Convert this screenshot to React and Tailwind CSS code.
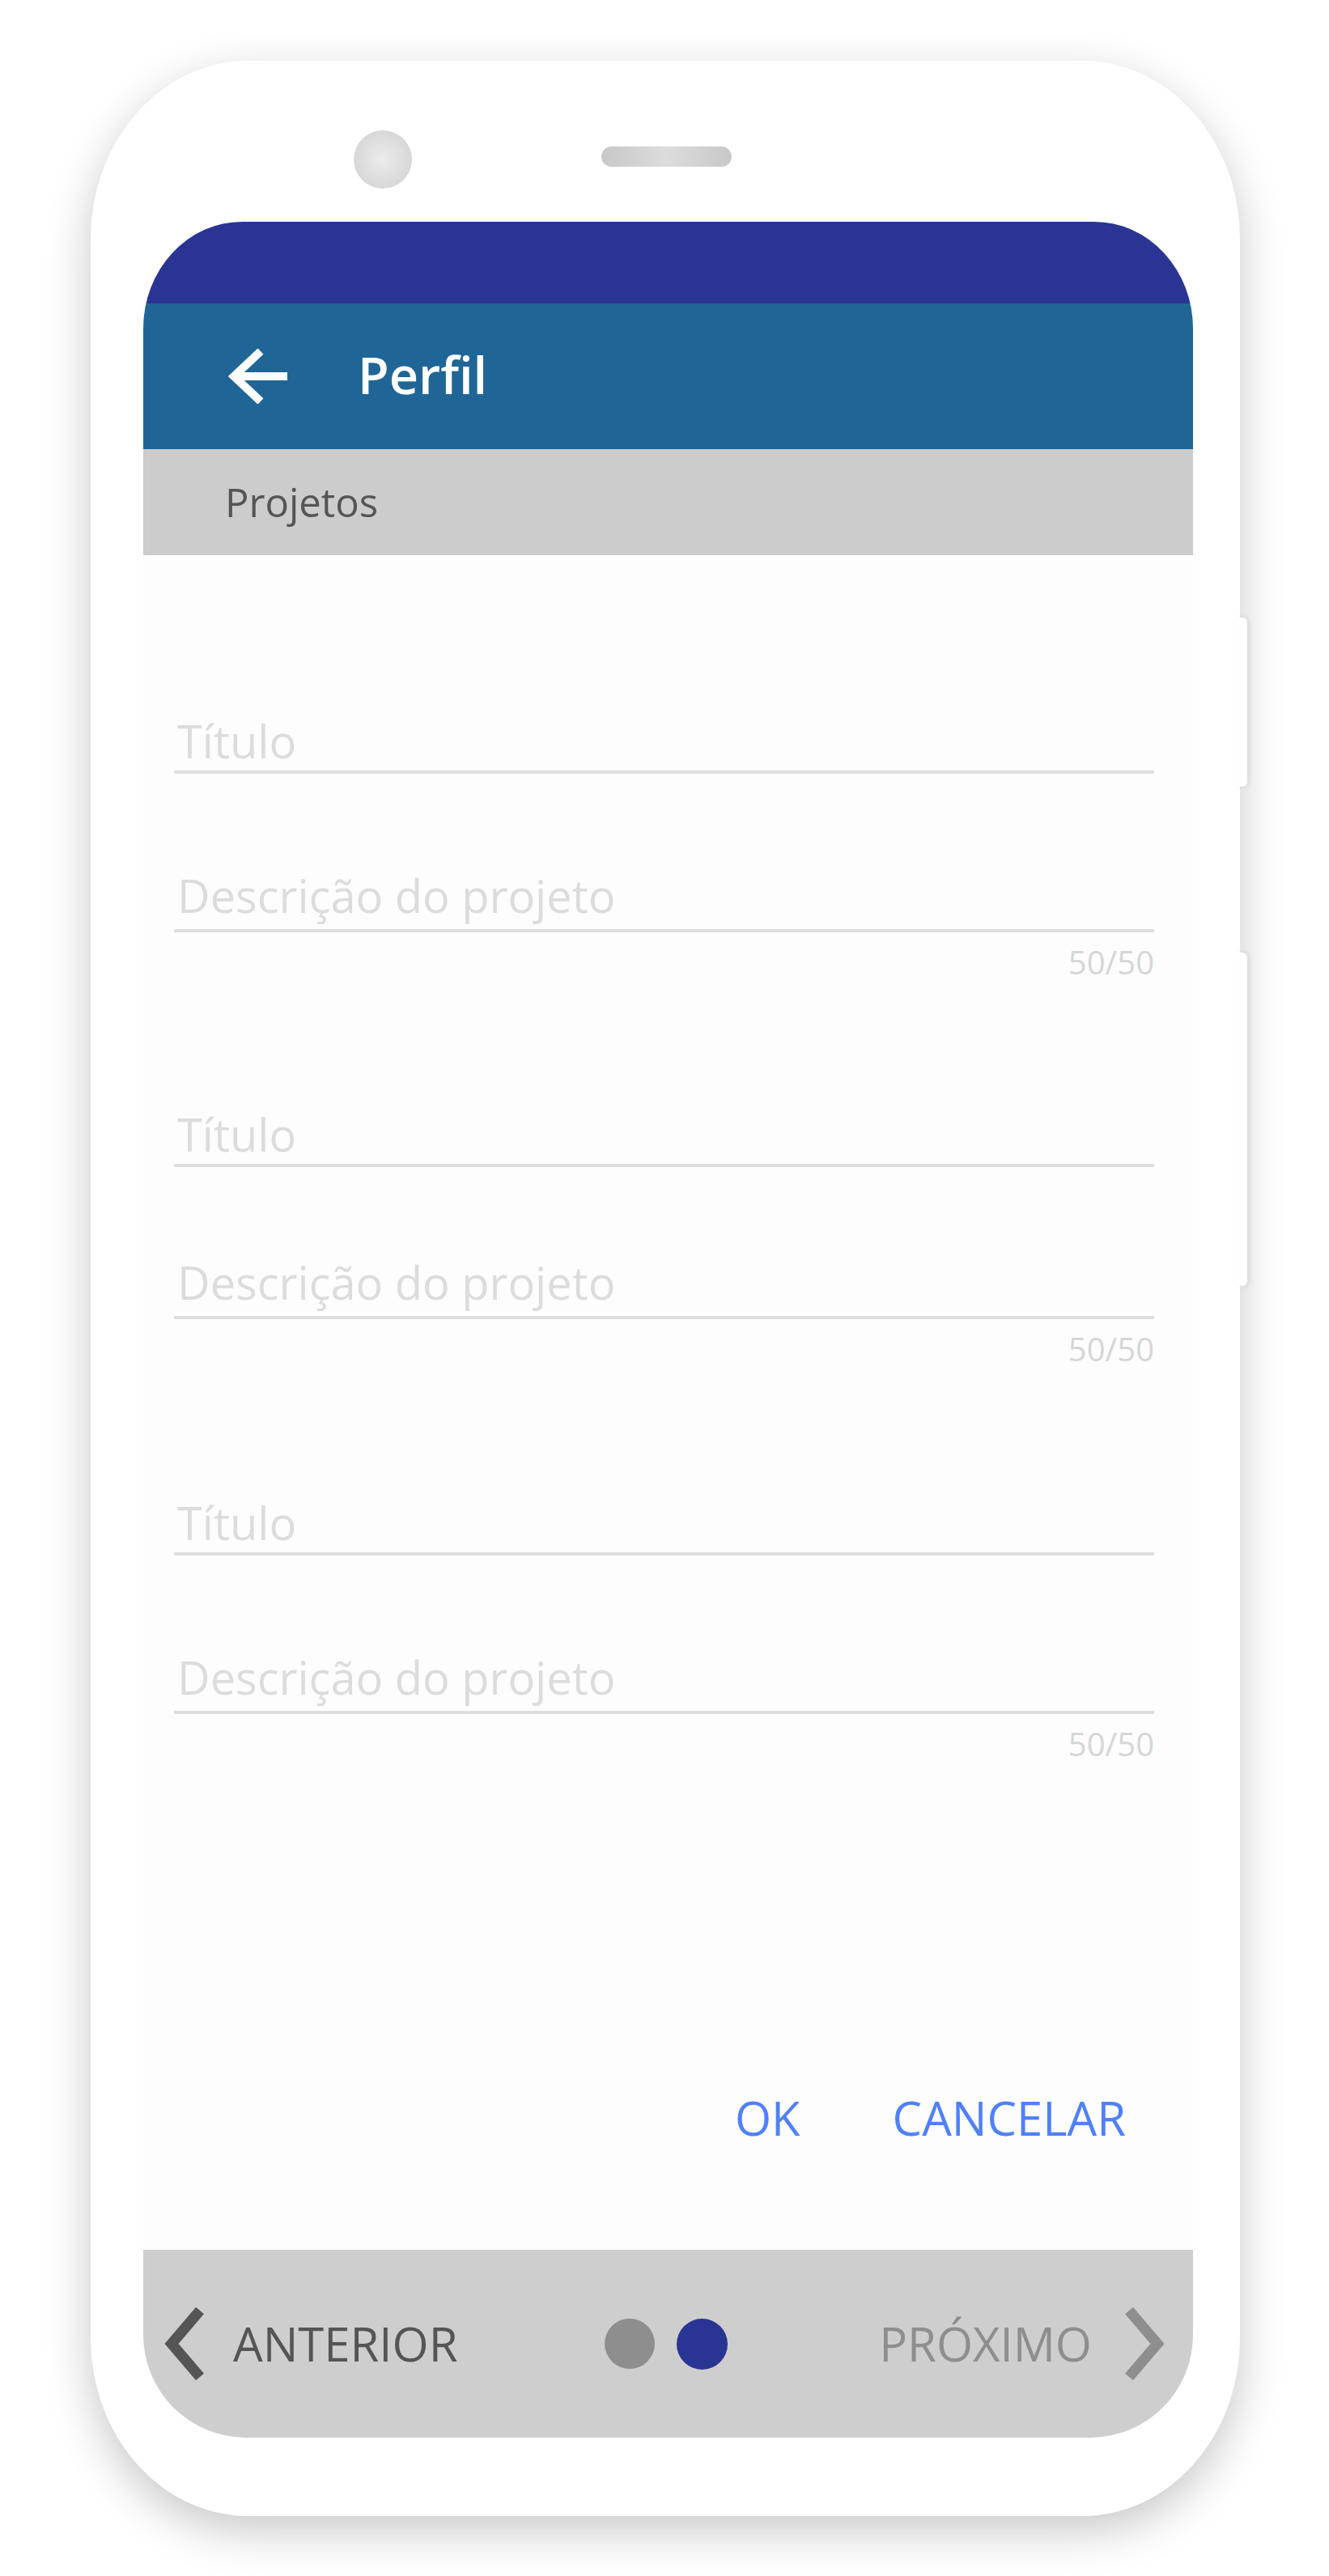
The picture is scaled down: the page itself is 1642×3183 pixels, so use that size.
import React from 'react';

const font = "font-['Open_Sans','Noto_Sans',sans-serif]";

function BackArrow() {
  return (
    <svg width="74" height="68" viewBox="0 0 74 68" fill="none">
      <polyline points="40,3 7,34 40,65" stroke="#fff" strokeWidth="10" strokeLinejoin="miter" />
      <line x1="7" y1="34" x2="73" y2="34" stroke="#fff" strokeWidth="10" />
    </svg>
  );
}

function Chevron({ dir = 'left', color }) {
  const pts = dir === 'left' ? '44,4 9,45 44,86' : '6,4 41,45 6,86';
  return (
    <svg width="50" height="90" viewBox="0 0 50 90" fill="none">
      <polyline points={pts} stroke={color} strokeWidth="13" strokeLinejoin="miter" />
    </svg>
  );
}

function ProjectFields({ className = '', descGap = 'mt-[122px]' }) {
  return (
    <div className={`flex flex-col w-[1211px] ml-[38px] ${className}`}>
      <div className="border-b-4 border-[#dedede] pb-[9px]">
        <p className="text-[56px] leading-none text-[#dcdcdc] pl-[4px]">Título</p>
      </div>
      <div className={`border-b-4 border-[#dedede] pb-[14px] ${descGap}`}>
        <p className="text-[56px] leading-none text-[#dcdcdc] pl-[4px]">Descrição do projeto</p>
      </div>
      <p className="text-[40px] leading-none text-[#d6d6d6] text-right mt-[17px]">50/50</p>
    </div>
  );
}

export default function App() {
  return (
    <div className={`${font} w-[1642px] h-[3183px] bg-white pl-[112px] pt-[75px]`}>
      <div className="relative w-[1420px] h-[3034px] bg-white rounded-[195px/220px] shadow-[0_18px_55px_rgba(0,0,0,0.22)]">
        {/* side keys */}
        <div className="absolute right-[-9px] top-[688px] w-[14px] h-[209px] bg-white rounded-r-[6px] shadow-[3px_0_6px_rgba(0,0,0,0.08)]" />
        <div className="absolute right-[-9px] top-[1102px] w-[14px] h-[412px] bg-white rounded-r-[6px] shadow-[3px_0_6px_rgba(0,0,0,0.08)]" />

        {/* earpiece + camera */}
        <div className="h-[199px] flex items-start pl-[325px] pt-[86px]">
          <div className="w-[72px] h-[72px] rounded-full bg-[radial-gradient(circle_at_50%_50%,#ececec,#cfcfcf)]" />
          <div className="ml-[234px] mt-[20px] w-[161px] h-[25px] rounded-full bg-[linear-gradient(90deg,#c8c8c8,#dcdcdc_50%,#c8c8c8)]" />
        </div>

        {/* screen */}
        <div className="ml-[65px] w-[1297px] h-[2738px] flex flex-col overflow-hidden rounded-tl-[122px_132px] rounded-tr-[122px_132px] rounded-b-[127px] bg-[#fdfdfd]">
          <div className="h-[101px] bg-[#2a3593]" />
          <div className="h-[180px] bg-[#1f6696] flex items-center pl-[105px]">
            <BackArrow />
            <h1 className="ml-[86px] text-[63px] font-semibold text-white leading-none pb-[6px]">Perfil</h1>
          </div>
          <div className="h-[131px] bg-[#cccccc] flex items-center pl-[101px]">
            <span className="text-[49px] text-[#555555] leading-none">Projetos</span>
          </div>

          <div className="h-[2094px] flex flex-col pt-[201px]">
            <ProjectFields />
            <ProjectFields className="mt-[164px]" descGap="mt-[114px]" />
            <ProjectFields className="mt-[166px]" />
            <div className="flex-1" />
            <div className="flex justify-end items-center gap-[114px] pr-[83px] pb-[134px]">
              <button className="text-[58px] leading-none text-[#5081fb]">OK</button>
              <button className="text-[58px] leading-none text-[#5081fb]">CANCELAR</button>
            </div>
          </div>

          <div className="h-[232px] bg-[#cecece] grid grid-cols-[1fr_auto_1fr] items-center pl-[26px] pr-[35px]">
            <div className="flex items-center gap-[35px]">
              <Chevron dir="left" color="#555555" />
              <span className="text-[58px] leading-none text-[#555555]">ANTERIOR</span>
            </div>
            <div className="flex items-center gap-[27px] pl-[4px]">
              <span className="w-[62px] h-[62px] rounded-full bg-[#8e8e8e]" />
              <span className="w-[63px] h-[63px] rounded-full bg-[#283593]" />
            </div>
            <div className="flex items-center justify-end gap-[40px]">
              <span className="text-[58px] leading-none text-[#8e8e8e]">PRÓXIMO</span>
              <Chevron dir="right" color="#8e8e8e" />
            </div>
          </div>
        </div>
      </div>
    </div>
  );
}
